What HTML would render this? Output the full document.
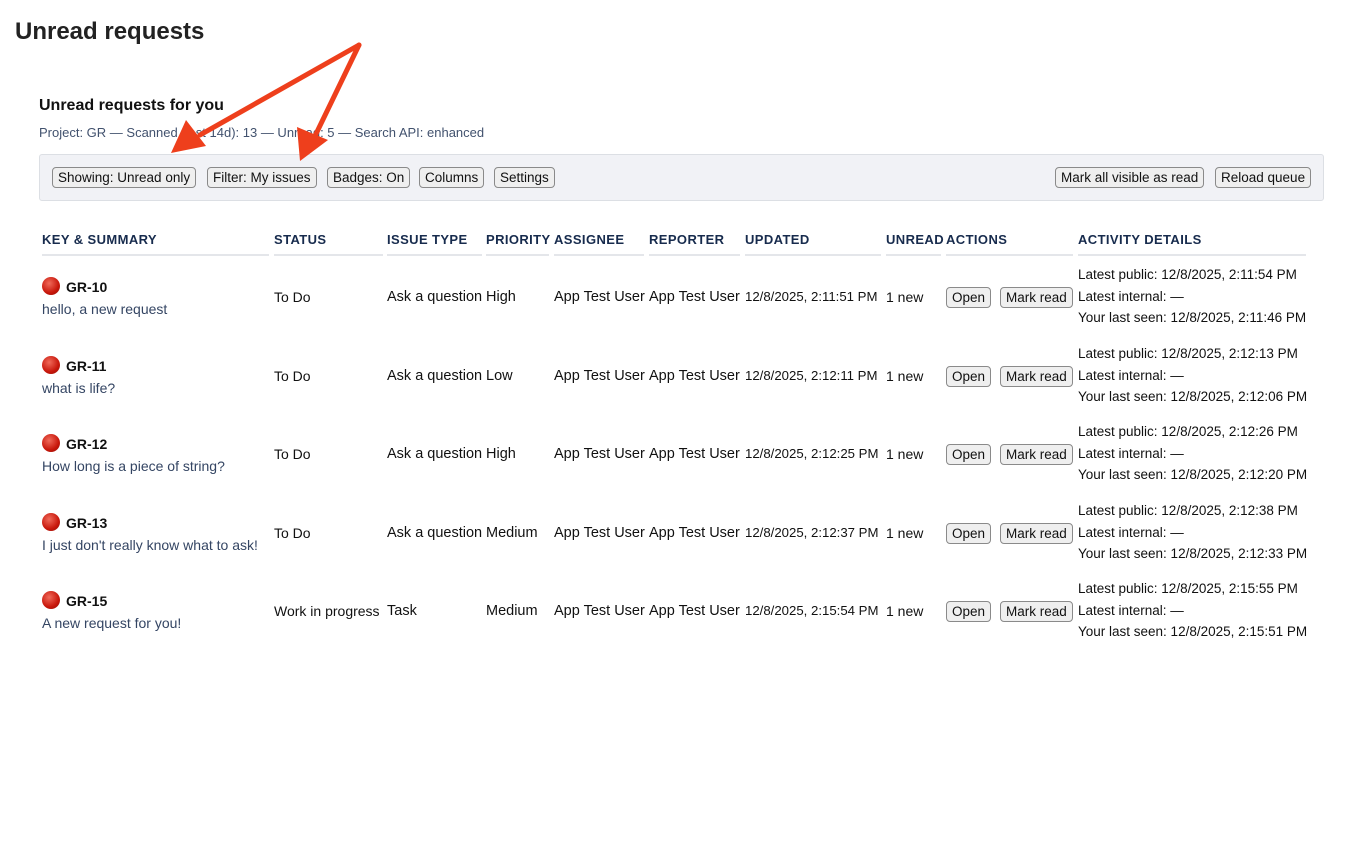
<!DOCTYPE html><html><head><style>
body{margin:0;width:1354px;height:865px;background:#fff;font-family:"Liberation Sans",sans-serif;color:#172b4d;position:relative;overflow:hidden}
.a{position:absolute;white-space:nowrap;font-size:14px;line-height:16px}
h1{position:absolute;left:15px;top:18px;margin:0;font-size:24px;font-weight:bold;color:#222}
.h2{position:absolute;left:39px;top:97px;font-size:16px;font-weight:bold;color:#111}
.meta{position:absolute;left:39px;top:125px;font-size:13px;color:#42526e}
.bar{position:absolute;left:39px;top:154px;width:1285px;height:47px;background:#f1f2f6;border:1px solid #dcdfe4;border-radius:3px;box-sizing:border-box}
.b{position:absolute;height:21px;box-sizing:border-box;border:1px solid #8a8a8a;border-radius:4px;background:#efefef;font-size:13.5px;line-height:19px;padding:0 5px;color:#111;white-space:nowrap}
.th{position:absolute;top:232px;font-size:13px;font-weight:bold;letter-spacing:.4px;color:#172b4d}
.ul{position:absolute;top:254px;height:2px;background:#e4e6ea}
.dot{display:inline-block;width:18px;height:18px;border-radius:50%;background:radial-gradient(circle at 40% 35%,#f06a5a,#c8170b 60%,#8e0c05);vertical-align:-3px;margin-right:6px}
.k{font-weight:bold;color:#111}
.s{color:#344563}
.t{color:#111;font-size:14px}
.w{color:#111;font-size:14.5px}
.d{color:#111;font-size:13.2px}
.ac{color:#111;font-size:13.5px}
</style></head><body>
<h1>Unread requests</h1>
<div class="h2">Unread requests for you</div>
<div class="meta">Project: GR — Scanned (last 14d): 13 — Unread: 5 — Search API: enhanced</div>
<div class="bar"></div>
<div class="b" style="left:52px;top:167px">Showing: Unread only</div>
<div class="b" style="left:207px;top:167px">Filter: My issues</div>
<div class="b" style="left:327px;top:167px">Badges: On</div>
<div class="b" style="left:419px;top:167px">Columns</div>
<div class="b" style="left:494px;top:167px">Settings</div>
<div class="b" style="left:1055px;top:167px">Mark all visible as read</div>
<div class="b" style="left:1215px;top:167px">Reload queue</div>

<div class="th" style="left:42px">KEY &amp; SUMMARY</div><div class="ul" style="left:42px;width:227px"></div>
<div class="th" style="left:274px">STATUS</div><div class="ul" style="left:274px;width:109px"></div>
<div class="th" style="left:387px">ISSUE TYPE</div><div class="ul" style="left:387px;width:95px"></div>
<div class="th" style="left:486px">PRIORITY</div><div class="ul" style="left:486px;width:63px"></div>
<div class="th" style="left:554px">ASSIGNEE</div><div class="ul" style="left:554px;width:90px"></div>
<div class="th" style="left:649px">REPORTER</div><div class="ul" style="left:649px;width:91px"></div>
<div class="th" style="left:745px">UPDATED</div><div class="ul" style="left:745px;width:136px"></div>
<div class="th" style="left:886px">UNREAD</div><div class="ul" style="left:886px;width:55px"></div>
<div class="th" style="left:946px">ACTIONS</div><div class="ul" style="left:946px;width:127px"></div>
<div class="th" style="left:1078px">ACTIVITY DETAILS</div><div class="ul" style="left:1078px;width:228px"></div>

<div id="rows"></div>
<script>
var R=[["GR-10","hello, a new request","To Do","Ask a question","High","12/8/2025, 2:11:51 PM","12/8/2025, 2:11:54 PM","12/8/2025, 2:11:46 PM"],
["GR-11","what is life?","To Do","Ask a question","Low","12/8/2025, 2:12:11 PM","12/8/2025, 2:12:13 PM","12/8/2025, 2:12:06 PM"],
["GR-12","How long is a piece of string?","To Do","Ask a question","High","12/8/2025, 2:12:25 PM","12/8/2025, 2:12:26 PM","12/8/2025, 2:12:20 PM"],
["GR-13","I just don't really know what to ask!","To Do","Ask a question","Medium","12/8/2025, 2:12:37 PM","12/8/2025, 2:12:38 PM","12/8/2025, 2:12:33 PM"],
["GR-15","A new request for you!","Work in progress","Task","Medium","12/8/2025, 2:15:54 PM","12/8/2025, 2:15:55 PM","12/8/2025, 2:15:51 PM"]];
var h="";R.forEach(function(r,i){var c=297+i*78.5;var y=c-8;
h+='<div class="a k" style="left:42px;top:'+(c-20)+'px"><span class="dot"></span>'+r[0]+'</div>';
h+='<div class="a s" style="left:42px;top:'+(c+4)+'px">'+r[1]+'</div>';
h+='<div class="a t" style="left:274px;top:'+y+'px">'+r[2]+'</div>';
h+='<div class="a w" style="left:387px;top:'+y+'px">'+r[3]+'</div>';
h+='<div class="a w" style="left:486px;top:'+y+'px">'+r[4]+'</div>';
h+='<div class="a w" style="left:554px;top:'+y+'px">App Test User</div>';
h+='<div class="a w" style="left:649px;top:'+y+'px">App Test User</div>';
h+='<div class="a d" style="left:745px;top:'+y+'px">'+r[5]+'</div>';
h+='<div class="a t" style="left:886px;top:'+y+'px">1 new</div>';
h+='<div class="b" style="left:946px;top:'+(c-10)+'px">Open</div>';
h+='<div class="b" style="left:1000px;top:'+(c-10)+'px">Mark read</div>';
h+='<div class="a ac" style="left:1078px;top:'+(c-30)+'px">Latest public: '+r[6]+'</div>';
h+='<div class="a ac" style="left:1078px;top:'+(c-8)+'px">Latest internal: —</div>';
h+='<div class="a ac" style="left:1078px;top:'+(c+13)+'px">Your last seen: '+r[7]+'</div>';
});document.getElementById("rows").innerHTML=h;
</script>
<svg style="position:absolute;left:0;top:0" width="1354" height="865">
<g stroke="#ee3f1c" stroke-width="5" stroke-linecap="round" fill="none"><line x1="359" y1="45" x2="200" y2="135"/><line x1="359" y1="45" x2="315" y2="136"/></g>
<polygon points="171,153 186,120 206,146" fill="#ee3f1c"/>
<polygon points="300,161 297,127 328,140" fill="#ee3f1c"/>
</svg>
</body></html>
